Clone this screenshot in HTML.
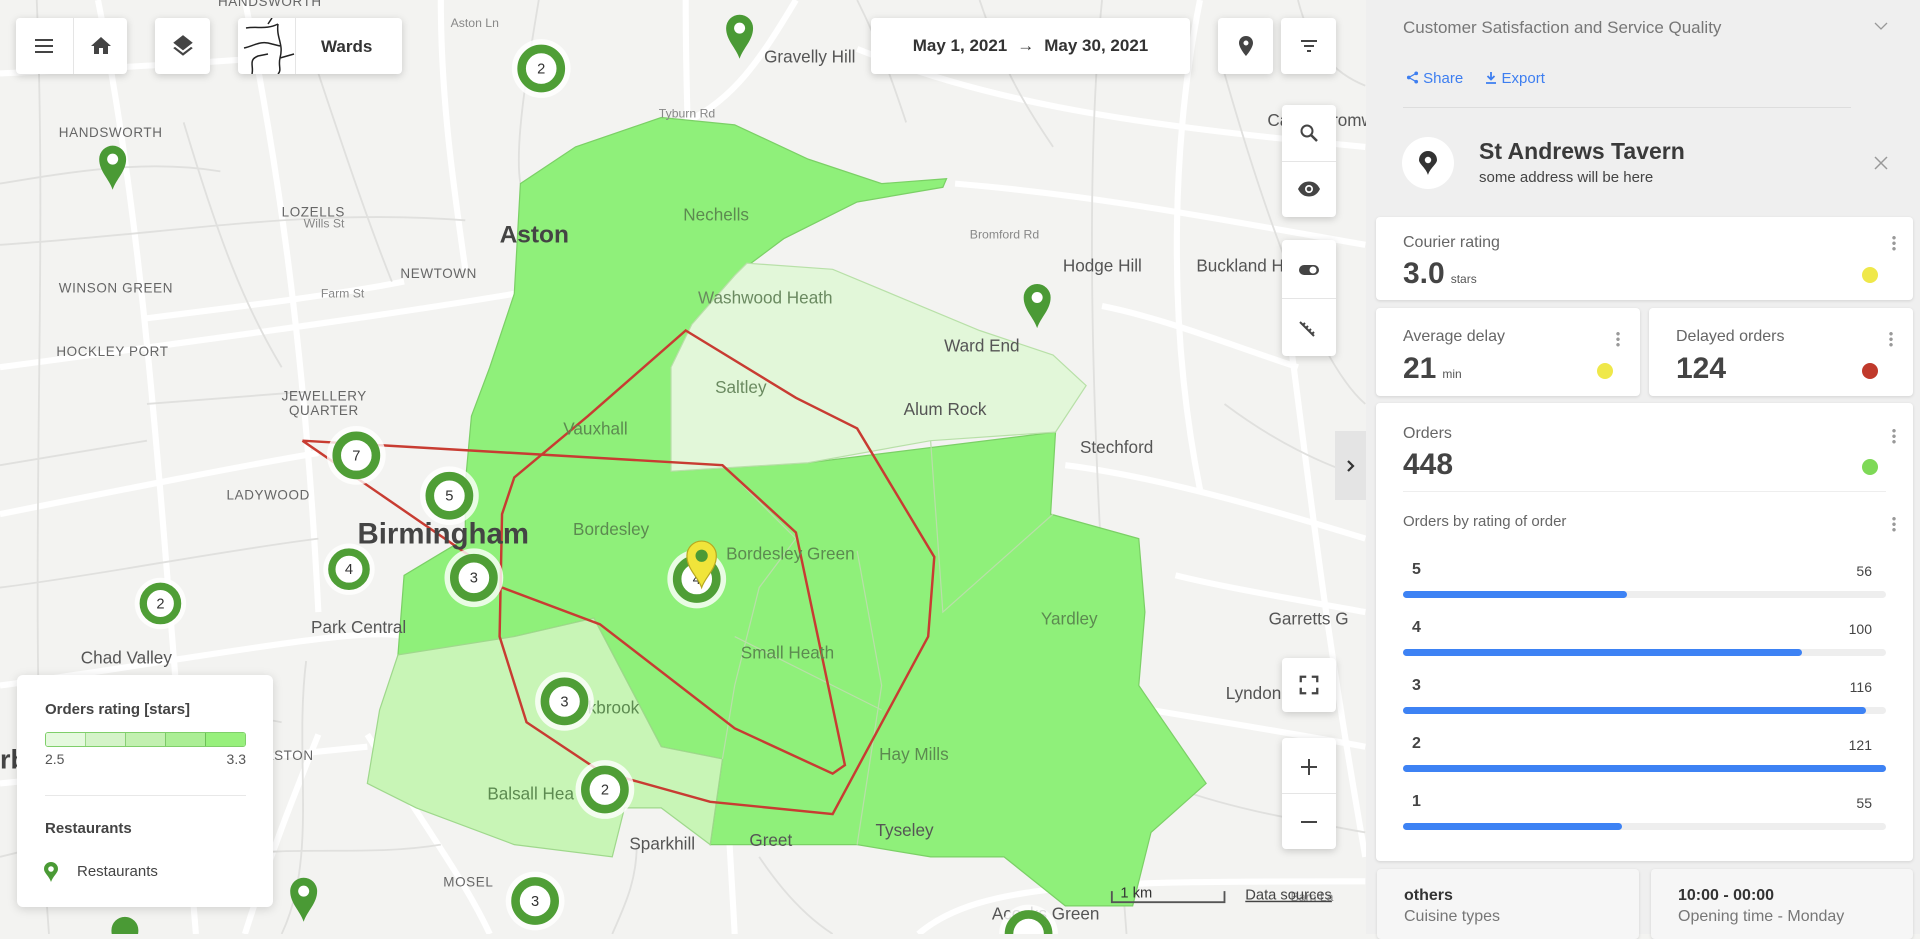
<!DOCTYPE html>
<html><head><meta charset="utf-8"><style>
*{box-sizing:border-box;margin:0;padding:0}
body{width:1920px;height:934px;overflow:hidden;font-family:"Liberation Sans",Arial,sans-serif;background:#f3f3f1;position:relative}
.btn{position:absolute;background:#fff;border-radius:4px;box-shadow:0 2px 8px rgba(0,0,0,.18);display:flex;align-items:center;justify-content:center}
.side{position:absolute;left:1366px;top:0;width:554px;height:934px;background:#efefef}
.card{position:absolute;background:#fff;border-radius:4px;box-shadow:0 1px 3px rgba(0,0,0,.12)}
.lbl{position:absolute;font-size:16px;color:#666}
.val{position:absolute;font-size:30px;font-weight:bold;color:#444}
.unit{font-size:12px;font-weight:normal;color:#555;margin-left:6px}
.dot{position:absolute;width:16px;height:16px;border-radius:50%}
.keb{position:absolute;width:4px;height:16px;background:radial-gradient(circle,#999 1.5px,transparent 2px) 0 0/4px 5.5px repeat-y}
.bar{position:absolute;left:27px;width:483px;height:7px;background:#eee;border-radius:4px}
.bar i{display:block;height:7px;background:#3d82f4;border-radius:4px}
.bn{position:absolute;left:45px;font-size:16px;font-weight:bold;color:#444}
.bv{position:absolute;right:41px;font-size:14px;color:#444}
</style></head><body>
<svg width="1920" height="934" viewBox="0 0 1568 763" preserveAspectRatio="none" style="position:absolute;left:0;top:0">
<rect width="1568" height="763" fill="#f3f3f1"/>
<g stroke="#fff" stroke-width="5" fill="none">
<path d="M0,300 C150,280 300,260 420,240 M0,420 C100,400 200,380 260,370 M80,0 C120,200 130,400 160,763 M200,0 C230,150 250,300 260,500 M0,560 C150,540 300,510 330,520 M560,0 C560,200 580,400 600,763 M700,40 C800,80 900,100 1115,120 M780,150 C900,160 1000,180 1115,200 M870,380 C950,390 1050,420 1115,440 M940,580 C1000,590 1060,600 1115,610 M300,600 C350,680 380,720 400,763 M200,763 C220,700 240,650 260,600 M0,640 C100,630 200,620 300,610 M650,0 C620,50 600,80 560,100 M360,0 C360,80 370,150 380,220 M980,0 C960,100 950,250 980,400 M1050,250 C1070,400 1080,500 1115,700 M750,763 C800,720 900,720 1115,720 M0,60 C100,55 200,50 300,40 M120,260 C200,250 280,240 330,230 M900,250 C950,260 1000,280 1060,300 M960,470 C1000,480 1060,490 1115,500"/>
</g>
<g stroke="#e0e0de" stroke-width="1.5" fill="none">
<path d="M0,200 C150,190 250,170 380,180 M0,480 C80,470 180,450 260,440 M30,0 C40,250 20,500 40,763 M440,0 C430,60 420,120 425,150 M900,0 C880,200 900,500 920,763 M1000,60 C1040,200 1080,300 1115,330 M250,540 C240,620 260,700 230,763 M520,690 C520,720 510,740 500,763 M620,700 C640,730 660,750 680,763 M120,330 L250,320 M150,100 C180,200 200,250 230,300 M0,150 C60,140 120,130 180,140 M260,60 C280,120 300,180 320,230 M0,380 L120,360 M60,600 C120,590 180,580 230,590 M800,0 C820,60 840,90 860,120 M1000,330 C1040,360 1080,380 1115,390 M950,640 C1000,660 1060,670 1115,680 M180,700 C240,690 300,700 360,690 M0,700 C40,690 80,680 120,690 M700,0 C720,40 730,70 740,100 M1060,0 C1070,40 1090,60 1115,70"/>
</g>
<path d="M540,96 L600,102 L660,130 L720,150 L773,146 L770,153 L700,165 L640,195 L600,225 L565,265 L548,300 L548,385 L660,378 L862,353 L858,420 L930,440 L935,500 L930,560 L985,640 L940,680 L925,740 L870,740 L820,700 L760,700 L700,690 L640,690 L580,690 L590,620 L540,610 L485,505 L420,520 L360,535 L325,535 L330,470 L360,452 L380,440 L380,395 L385,340 L400,300 L420,240 L425,150 L470,120 Z" fill="#8ff07a" stroke="#7bd066" stroke-width="1"/>
<path d="M610,215 L680,220 L740,245 L800,270 L860,290 L887,315 L862,353 L760,360 L660,378 L548,385 L548,300 L565,265 L600,225 Z" fill="#e2f7d9" stroke="#b8e0a8" stroke-width="1"/>
<path d="M325,535 L420,520 L485,505 L540,610 L590,620 L580,690 L540,660 L510,660 L500,700 L420,690 L340,660 L300,640 L310,580 Z" fill="#c8f5b6" stroke="#9fd88c" stroke-width="1"/>
<g stroke="#b9dfa9" stroke-width="1" fill="none"><path d="M590,380 L650,440 L620,480 L600,560 L590,620 M700,450 L720,560 L700,690 M600,520 L720,580 M760,360 L770,500 L860,420"/></g>
<g stroke="#c83c32" stroke-width="2" fill="none">
<path d="M247,360 L385,455 M247,360 L590,380 L650,435 L690,625 L680,632 L600,595 L490,510 L410,480"/>
<path d="M560,270 L650,325 L700,350 L763,455 L758,520 L680,665 L580,655 L490,630 L430,590 L408,520 L410,420 L420,390 L480,340 Z"/>
</g>
<g font-family="Liberation Sans,Arial,sans-serif" fill="#555" font-size="14">
<text x="408" y="198" font-size="20" font-weight="bold" fill="#444">Aston</text>
<text x="292" y="444" font-size="24" font-weight="bold" fill="#444">Birmingham</text>
<text x="624" y="51">Gravelly Hill</text><text x="558" y="180" fill="#5c8a50">Nechells</text>
<text x="570" y="248" fill="#6a8a60">Washwood Heath</text><text x="771" y="287">Ward End</text>
<text x="584" y="321" fill="#6a8a60">Saltley</text><text x="738" y="339">Alum Rock</text>
<text x="882" y="370">Stechford</text><text x="868" y="222">Hodge Hill</text><text x="977" y="222">Buckland H</text>
<text x="460" y="355" fill="#5c8a50">Vauxhall</text><text x="468" y="437" fill="#5c8a50">Bordesley</text>
<text x="593" y="457" fill="#5c8a50">Bordesley Green</text><text x="605" y="538" fill="#5c8a50">Small Heath</text>
<text x="850" y="510" fill="#5c8a50">Yardley</text><text x="718" y="621" fill="#5c8a50">Hay Mills</text>
<text x="715" y="683">Tyseley</text><text x="612" y="691">Greet</text><text x="514" y="694">Sparkhill</text>
<text x="398" y="653" fill="#5c8a50">Balsall Hea</text><text x="480" y="583" fill="#5c8a50">kbrook</text>
<text x="254" y="517">Park Central</text><text x="66" y="542">Chad Valley</text>
<text x="1036" y="510">Garretts G</text><text x="1001" y="571">Lyndon Gre</text><text x="810" y="751">Acocks Green</text>
<text x="1035" y="103">Castle Bromwich</text>
<g font-size="11" letter-spacing=".5" fill="#666"><text x="185" y="408">LADYWOOD</text><text x="46" y="291">HOCKLEY PORT</text><text x="48" y="239">WINSON GREEN</text><text x="327" y="227">NEWTOWN</text><text x="230" y="177">LOZELLS</text><text x="48" y="112">HANDSWORTH</text><text x="230" y="327">JEWELLERY</text><text x="236" y="339">QUARTER</text><text x="216" y="621">ASTON</text><text x="178" y="5">HANDSWORTH</text><text x="362" y="724">MOSEL</text></g>
<g font-size="10" fill="#888"><text x="262" y="243">Farm St</text><text x="248" y="186">Wills St</text><text x="538" y="96">Tyburn Rd</text><text x="792" y="195">Bromford Rd</text><text x="368" y="22">Aston Ln</text><text x="1054" y="736">Barn La</text></g>
<text x="0" y="628" font-size="22" font-weight="bold" fill="#444">rb</text>
</g>
<g id="clusters" font-family="Liberation Sans,Arial,sans-serif" font-size="12" text-anchor="middle" fill="#333">
<g transform="translate(442,56)"><circle r="24" fill="#fff" opacity=".8"/><circle r="16" fill="#fff" stroke="#4f9e36" stroke-width="7"/><text y="4">2</text></g>
<g transform="translate(291,372)"><circle r="24" fill="#fff" opacity=".8"/><circle r="16" fill="#fff" stroke="#4f9e36" stroke-width="7"/><text y="4">7</text></g>
<g transform="translate(367,405)"><circle r="24" fill="#fff" opacity=".8"/><circle r="16" fill="#fff" stroke="#4f9e36" stroke-width="7"/><text y="4">5</text></g>
<g transform="translate(285,465)"><circle r="21" fill="#fff" opacity=".8"/><circle r="14" fill="#fff" stroke="#4f9e36" stroke-width="6"/><text y="4">4</text></g>
<g transform="translate(387,472)"><circle r="24" fill="#fff" opacity=".8"/><circle r="16" fill="#fff" stroke="#4f9e36" stroke-width="7"/><text y="4">3</text></g>
<g transform="translate(131,493)"><circle r="21" fill="#fff" opacity=".8"/><circle r="14" fill="#fff" stroke="#4f9e36" stroke-width="6"/><text y="4">2</text></g>
<g transform="translate(461,573)"><circle r="24" fill="#fff" opacity=".8"/><circle r="16" fill="#fff" stroke="#4f9e36" stroke-width="7"/><text y="4">3</text></g>
<g transform="translate(494,645)"><circle r="24" fill="#fff" opacity=".8"/><circle r="16" fill="#fff" stroke="#4f9e36" stroke-width="7"/><text y="4">2</text></g>
<g transform="translate(437,736)"><circle r="24" fill="#fff" opacity=".8"/><circle r="16" fill="#fff" stroke="#4f9e36" stroke-width="7"/><text y="4">3</text></g>
<g transform="translate(569,473)"><circle r="24" fill="#fff" opacity=".8"/><circle r="16" fill="#fff" stroke="#4f9e36" stroke-width="7"/><text y="4">4</text></g>
<g transform="translate(840,763)"><circle r="24" fill="#fff" opacity=".8"/><circle r="16" fill="#fff" stroke="#4f9e36" stroke-width="7"/></g>
</g>
<defs><path id="pin" d="M0,0 C-3,-9 -11,-15 -11,-25 A11,11 0 1 1 11,-25 C11,-15 3,-9 0,0Z"/></defs>
<g fill="#4a9a35">
<g transform="translate(604,48)"><use href="#pin"/><circle cy="-25" r="4.5" fill="#fff"/></g>
<g transform="translate(92,155)"><use href="#pin"/><circle cy="-25" r="4.5" fill="#fff"/></g>
<g transform="translate(847,268)"><use href="#pin"/><circle cy="-25" r="4.5" fill="#fff"/></g>
<g transform="translate(248,753)"><use href="#pin"/><circle cy="-25" r="4.5" fill="#fff"/></g>
<g transform="translate(102,785)"><use href="#pin"/></g>
</g>
<g transform="translate(573,480)"><path d="M0,0 C-3,-9 -12,-15 -12,-26 A12,12 0 1 1 12,-26 C12,-15 3,-9 0,0Z" fill="#f0e43a" stroke="#b8a820" stroke-width="1"/><circle cy="-26" r="5" fill="#4a9a35"/></g>
<path d="M908,728 L908,737 L1000,737 L1000,728" stroke="#555" stroke-width="1.5" fill="none"/>
<text x="915" y="733" font-family="Liberation Sans,Arial,sans-serif" font-size="12" fill="#333">1 km</text>
<text x="1017" y="735" font-family="Liberation Sans,Arial,sans-serif" font-size="12" fill="#444" text-decoration="underline">Data sources</text>
</svg>

<div class="btn" style="left:16px;top:18px;width:111px;height:56px">
 <div style="position:absolute;left:57px;top:0;width:1px;height:56px;background:#e5e5e5"></div>
 <svg style="position:absolute;left:16px;top:16px" width="24" height="24" viewBox="0 0 24 24"><path d="M3 6h18M3 12h18M3 18h18" stroke="#444" stroke-width="2"/></svg>
 <svg style="position:absolute;left:73px;top:16px" width="24" height="24" viewBox="0 0 24 24"><path d="M10 20v-6h4v6h5v-8h3L12 3 2 12h3v8z" fill="#444"/></svg>
</div>
<div class="btn" style="left:155px;top:18px;width:55px;height:56px"><svg width="26" height="26" viewBox="0 0 24 24"><path d="M12 2 3 9l9 7 9-7-9-7zm0 16.5L4.6 12.8 3 14l9 7 9-7-1.6-1.2z" fill="#444"/></svg></div>
<div class="btn" style="left:238px;top:18px;width:164px;height:56px;justify-content:flex-start">
 <svg style="position:absolute;left:0;top:0" width="57" height="56"><path d="M8,10 C20,8 28,12 40,6 M40,6 C38,20 46,26 42,40 C40,48 44,52 40,56 M6,30 C16,28 22,22 34,26 L42,28 M14,56 C16,48 10,42 20,38 L30,36 M42,40 L56,36 M30,6 L34,0" stroke="#222" stroke-width="1.5" fill="none"/></svg>
 <div style="position:absolute;left:57px;top:0;width:1px;height:56px;background:#e5e5e5"></div>
 <span style="position:absolute;left:83px;top:19px;font-size:17px;font-weight:bold;color:#333">Wards</span>
</div>
<div class="btn" style="left:871px;top:18px;width:319px;height:56px;font-size:17px;font-weight:bold;color:#333">May 1, 2021 <span style="margin:0 10px;font-weight:normal">→</span> May 30, 2021</div>
<div class="btn" style="left:1218px;top:18px;width:55px;height:56px"><svg width="24" height="24" viewBox="0 0 24 24"><path d="M12 2C8 2 5 5 5 9c0 5 7 13 7 13s7-8 7-13c0-4-3-7-7-7zm0 9.5a2.5 2.5 0 1 1 0-5 2.5 2.5 0 0 1 0 5z" fill="#444"/></svg></div>
<div class="btn" style="left:1281px;top:18px;width:55px;height:56px"><svg width="24" height="24" viewBox="0 0 24 24"><path d="M4 7h16M7 12h10M10 17h4" stroke="#444" stroke-width="2"/></svg></div>
<div class="btn" style="left:1282px;top:105px;width:54px;height:112px;flex-direction:column">
 <svg style="position:absolute;left:15px;top:16px" width="24" height="24" viewBox="0 0 24 24"><circle cx="10" cy="10" r="5.5" stroke="#444" stroke-width="2" fill="none"/><path d="M14 14l6 6" stroke="#444" stroke-width="2.5"/></svg>
 <div style="position:absolute;top:56px;left:0;width:54px;height:1px;background:#e5e5e5"></div>
 <svg style="position:absolute;left:15px;top:72px" width="24" height="24" viewBox="0 0 24 24"><path d="M1 12C4 6 8 4.5 12 4.5S20 6 23 12c-3 6-7 7.5-11 7.5S4 18 1 12z" fill="#444"/><circle cx="12" cy="12" r="4" fill="#fff"/><circle cx="12" cy="12" r="2.3" fill="#444"/></svg>
</div>
<div class="btn" style="left:1282px;top:240px;width:54px;height:116px">
 <svg style="position:absolute;left:15px;top:18px" width="24" height="24" viewBox="0 0 24 24"><rect x="2" y="7" width="20" height="10" rx="5" fill="#444"/><circle cx="16" cy="12" r="3.5" fill="#fff"/></svg>
 <div style="position:absolute;top:58px;left:0;width:54px;height:1px;background:#e5e5e5"></div>
 <svg style="position:absolute;left:15px;top:75px" width="24" height="24" viewBox="0 0 24 24"><path d="M3 7l14 14M6 10l2-2M9 13l2-2M12 16l2-2M15 19l2-2" stroke="#444" stroke-width="2"/></svg>
</div>
<div class="btn" style="left:1282px;top:658px;width:54px;height:54px"><svg width="22" height="22" viewBox="0 0 24 24"><path d="M3 9V3h6M15 3h6v6M21 15v6h-6M9 21H3v-6" stroke="#444" stroke-width="2.5" fill="none"/></svg></div>
<div class="btn" style="left:1282px;top:738px;width:54px;height:111px">
 <svg style="position:absolute;left:15px;top:17px" width="24" height="24" viewBox="0 0 24 24"><path d="M4 12h16M12 4v16" stroke="#444" stroke-width="2"/></svg>
 <div style="position:absolute;top:55px;left:0;width:54px;height:1px;background:#e5e5e5"></div>
 <svg style="position:absolute;left:15px;top:72px" width="24" height="24" viewBox="0 0 24 24"><path d="M4 12h16" stroke="#444" stroke-width="2"/></svg>
</div>
<div style="position:absolute;left:1335px;top:431px;width:31px;height:69px;background:#e4e4e4;display:flex;align-items:center;justify-content:center"><svg width="14" height="14" viewBox="0 0 14 14"><path d="M4 2l5 5-5 5" stroke="#333" stroke-width="2.2" fill="none"/></svg></div>
<div style="position:absolute;left:17px;top:675px;width:256px;height:232px;background:#fff;border-radius:6px;box-shadow:0 2px 10px rgba(0,0,0,.15)">
 <div style="position:absolute;left:28px;top:26px;font-size:15px;font-weight:bold;color:#444">Orders rating [stars]</div>
 <div style="position:absolute;left:28px;top:57px;width:201px;height:15px;display:flex;border:1px solid #7fcf6a;border-radius:3px;overflow:hidden">
  <div style="flex:1;background:#e5f9de;border-right:1px solid #9ad888"></div><div style="flex:1;background:#d4f3c8;border-right:1px solid #88cf75"></div><div style="flex:1;background:#c2f0b0;border-right:1px solid #7cc868"></div><div style="flex:1;background:#abee95;border-right:1px solid #6cc056"></div><div style="flex:1;background:#97f07c"></div></div>
 <div style="position:absolute;left:28px;top:76px;font-size:14px;color:#555">2.5</div>
 <div style="position:absolute;right:27px;top:76px;font-size:14px;color:#555">3.3</div>
 <div style="position:absolute;left:28px;top:120px;width:201px;height:1px;background:#e8e8e8"></div>
 <div style="position:absolute;left:28px;top:145px;font-size:15px;font-weight:bold;color:#444">Restaurants</div>
 <svg style="position:absolute;left:27px;top:187px" width="14" height="20" viewBox="0 0 14 20"><path d="M7 20C5 14 0 11 0 7a7 7 0 0 1 14 0c0 4-5 7-7 13z" fill="#4a9a35"/><circle cx="7" cy="7" r="2.8" fill="#fff"/></svg>
 <div style="position:absolute;left:60px;top:188px;font-size:15px;color:#444">Restaurants</div>
</div>

<div class="side">
 <div style="position:absolute;left:37px;top:18px;font-size:17px;color:#777">Customer Satisfaction and Service Quality</div>
 <svg style="position:absolute;left:508px;top:21px" width="14" height="10"><path d="M1 2l6 6 6-6" stroke="#999" stroke-width="1.3" fill="none"/></svg>
 <div style="position:absolute;left:40px;top:70px;font-size:15px;color:#3d7ef0">
  <svg width="13" height="13" viewBox="0 0 14 14" style="vertical-align:-1px"><circle cx="11" cy="2.5" r="2" fill="#3d7ef0"/><circle cx="3" cy="7" r="2" fill="#3d7ef0"/><circle cx="11" cy="11.5" r="2" fill="#3d7ef0"/><path d="M11 2.5L3 7l8 4.5" stroke="#3d7ef0" stroke-width="1.3" fill="none"/></svg> Share
  <span style="margin-left:18px"><svg width="12" height="13" viewBox="0 0 12 13" style="vertical-align:-1px"><path d="M6 1v7M2.5 5L6 8.5 9.5 5M1 12h10" stroke="#3d7ef0" stroke-width="1.8" fill="none"/></svg> Export</span>
 </div>
 <div style="position:absolute;left:37px;top:107px;width:448px;height:1px;background:#ddd"></div>
 <div style="position:absolute;left:36px;top:137px;width:52px;height:52px;border-radius:50%;background:#fff;display:flex;align-items:center;justify-content:center"><svg width="18" height="24" viewBox="0 0 18 24"><path d="M9 24C7 17 0 13 0 9a9 9 0 0 1 18 0c0 4-7 8-9 15z" fill="#333"/><circle cx="9" cy="9" r="3.2" fill="#fff"/></svg></div>
 <div style="position:absolute;left:113px;top:138px;font-size:23px;font-weight:bold;color:#3a3a3a">St Andrews Tavern</div>
 <div style="position:absolute;left:113px;top:169px;font-size:15px;color:#444">some address will be here</div>
 <svg style="position:absolute;left:507px;top:155px" width="16" height="16"><path d="M2 2l12 12M14 2L2 14" stroke="#999" stroke-width="1.5"/></svg>

 <div class="card" style="left:10px;top:217px;width:537px;height:83px">
  <div class="lbl" style="left:27px;top:17px">Courier rating</div>
  <div class="val" style="left:27px;top:40px">3.0<span class="unit">stars</span></div>
  <div class="keb" style="left:516px;top:18px"></div>
  <div class="dot" style="left:486px;top:50px;background:#efe84a"></div>
 </div>
 <div class="card" style="left:10px;top:308px;width:264px;height:88px">
  <div class="lbl" style="left:27px;top:20px">Average delay</div>
  <div class="val" style="left:27px;top:44px">21<span class="unit">min</span></div>
  <div class="keb" style="left:240px;top:23px"></div>
  <div class="dot" style="left:221px;top:55px;background:#efe84a"></div>
 </div>
 <div class="card" style="left:283px;top:308px;width:264px;height:88px">
  <div class="lbl" style="left:27px;top:20px">Delayed orders</div>
  <div class="val" style="left:27px;top:44px">124</div>
  <div class="keb" style="left:240px;top:23px"></div>
  <div class="dot" style="left:213px;top:55px;background:#c0392b"></div>
 </div>
 <div class="card" style="left:10px;top:403px;width:537px;height:458px">
  <div class="lbl" style="left:27px;top:22px">Orders</div>
  <div class="val" style="left:27px;top:45px">448</div>
  <div class="keb" style="left:516px;top:25px"></div>
  <div class="dot" style="left:486px;top:56px;background:#7ed957"></div>
  <div style="position:absolute;left:27px;top:88px;width:483px;height:1px;background:#eee"></div>
  <div class="lbl" style="left:27px;top:110px;font-size:15px">Orders by rating of order</div>
  <div class="keb" style="left:516px;top:113px"></div>
  <div class="bn" style="left:36px;top:158px">5</div><div class="bv" style="top:160px">56</div><div class="bar" style="top:188px"><i style="width:224px"></i></div>
  <div class="bn" style="left:36px;top:216px">4</div><div class="bv" style="top:218px">100</div><div class="bar" style="top:246px"><i style="width:399px"></i></div>
  <div class="bn" style="left:36px;top:274px">3</div><div class="bv" style="top:276px">116</div><div class="bar" style="top:304px"><i style="width:463px"></i></div>
  <div class="bn" style="left:36px;top:332px">2</div><div class="bv" style="top:334px">121</div><div class="bar" style="top:362px"><i style="width:483px"></i></div>
  <div class="bn" style="left:36px;top:390px">1</div><div class="bv" style="top:392px">55</div><div class="bar" style="top:420px"><i style="width:219px"></i></div>
 </div>
 <div class="card" style="left:11px;top:869px;width:262px;height:70px;background:#f6f6f6">
  <div style="position:absolute;left:27px;top:18px;font-size:16px;font-weight:bold;color:#333">others</div>
  <div style="position:absolute;left:27px;top:39px;font-size:16px;color:#777">Cuisine types</div>
 </div>
 <div class="card" style="left:285px;top:869px;width:262px;height:70px;background:#f6f6f6">
  <div style="position:absolute;left:27px;top:18px;font-size:16px;font-weight:bold;color:#333">10:00 - 00:00</div>
  <div style="position:absolute;left:27px;top:39px;font-size:16px;color:#777">Opening time - Monday</div>
 </div>
</div>
</body></html>
